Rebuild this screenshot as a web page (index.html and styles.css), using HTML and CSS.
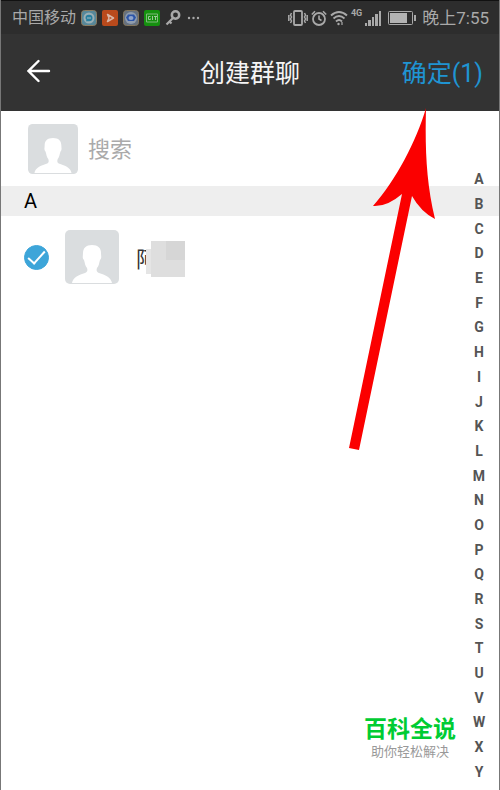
FILE: index.html
```html
<!DOCTYPE html>
<html lang="zh-CN">
<head>
    <meta charset="UTF-8">
    <meta name="viewport" content="width=device-width, initial-scale=1.0">
    <title>创建群聊</title>
    <link rel="stylesheet" href="styles.css">
</head>
<body>

    <div class="status-bar">
        <span class="carrier">中国移动</span>
        <svg class="app-icon" viewBox="0 0 16 16">
            <rect x="0.5" y="0.5" width="15" height="15" rx="3" fill="#57889a" stroke="#8b7d62"/>
            <circle cx="8" cy="8" r="5.5" fill="#9aafb5"/>
            <path d="M4.500 8a3.500 3.200 0 1 1 3.500 3.200H4.800l.7-1.300A3 3 0 0 1 4.500 8z" fill="#277f9f"/>
            <path d="M6 8h4" stroke="#a9bdc3"/>
        </svg>
        <svg class="app-icon" viewBox="0 0 16 16">
            <rect width="16" height="16" rx="2" fill="#b94a1c"/>
            <path d="M5.500 4.500l6 3.500-6 3.500 1.500-3.500z" fill="none" stroke="#d9b5a5" stroke-width="1.500" stroke-linejoin="round"/>
        </svg>
        <svg class="app-icon" viewBox="0 0 16 16">
            <rect x="0.5" y="0.5" width="15" height="15" rx="3" fill="#66717f" stroke="#83765d"/>
            <circle cx="8" cy="8" r="6" fill="#8f9cae"/>
            <path d="M3 7.500l2-3h6l2 3-2 3.500H5z" fill="#2c55a8"/>
            <ellipse cx="8" cy="8" rx="2.500" ry="2" fill="#8fa4cb"/>
        </svg>
        <svg class="app-icon" viewBox="0 0 16 16">
            <rect width="16" height="16" rx="2" fill="#15900f"/>
            <path d="M2.500 4h11v8h-11z" fill="none" stroke="#7fb87b"/>
            <path d="M6.500 6.500h-2v3h2v-1M8.500 6v4M10 6.500h3M11.500 6.500V10" fill="none" stroke="#9cc998"/>
        </svg>
        <svg class="app-icon" viewBox="0 0 16 16" fill="none" stroke="#a9a9a9">
            <circle cx="10.500" cy="5" r="3.700" stroke-width="2.500"/>
            <path d="M8 8l-6.500 6.500M4 11l2.500 2.500" stroke-width="2.200"/>
        </svg>
        <svg class="app-icon" viewBox="0 0 16 16" fill="#a9a9a9">
            <circle cx="3" cy="8" r="1.200"/>
            <circle cx="7.500" cy="8" r="1.200"/>
            <circle cx="12" cy="8" r="1.200"/>
        </svg>

        <div class="indicators">
            <svg width="20" height="16" viewBox="0 0 20 16" fill="none" stroke="#a9a9a9">
                <rect x="6" y="1" width="8" height="14" rx="1" stroke-width="1.800"/>
                <path d="M3.500 3L2.500 5l1 2-1 2 1 2-1 2M16.500 3l1 2-1 2 1 2-1 2 1 2M.8 5v6M19.200 5v6" stroke-width="1.500"/>
            </svg>
            <svg width="16" height="16" viewBox="0 0 16 16" fill="none" stroke="#a9a9a9">
                <circle cx="8" cy="9" r="6" stroke-width="1.800"/>
                <path d="M8 5.500V9l2.500 1.500M.8 4.500L4 1.300M15.200 4.500L12 1.300" stroke-width="1.600"/>
            </svg>
            <svg width="18" height="16" viewBox="0 0 18 16" fill="none" stroke="#a9a9a9" stroke-width="1.900">
                <path d="M1 5.500Q9-1.500 17 5.500M3.500 8.500Q9 3.500 14.500 8.500M6 11.500Q9 8.500 12 11.500"/>
                <circle cx="8.500" cy="14" r="1.200" fill="#a9a9a9" stroke="none"/>
                <path d="M12 12v3" stroke-width="1.200"/>
            </svg>
            <span class="network">4G</span>
            <svg width="17" height="16" viewBox="0 0 17 16" fill="#a9a9a9">
                <path d="M0 13h2v3H0zM3 10h3v6H3zM7 7h2v9H7zM10 4h3v12h-3zM14 1h2v15h-2z"/>
            </svg>
            <svg class="battery" width="28" height="14" viewBox="0 0 28 14">
                <rect x="0.5" y="0.5" width="24" height="13" rx="1" fill="none" stroke="#a9a9a9"/>
                <path d="M2 2h17v10H2z" fill="#b3b3b3"/>
                <path d="M26 4h2v6h-2z" fill="#a9a9a9"/>
            </svg>
            <span class="clock">晚上7:55</span>
        </div>
    </div>

    <header class="title-bar">
        <button class="back" aria-label="返回">
            <svg width="24" height="24" viewBox="0 0 24 24" fill="none" stroke="#fff" stroke-width="2.400" stroke-linecap="round">
                <path d="M11.500 2L1.500 12l10 10M1.500 12H22"/>
            </svg>
        </button>
        <h1 class="title">创建群聊</h1>
        <button class="confirm">确定(1)</button>
    </header>

    <main class="content">
        <div class="search-row">
            <svg class="avatar avatar-small" viewBox="0 0 54 54">
                <rect width="54" height="54" rx="5" fill="#dadddf"/>
                <path d="M7 53c1-6 7-8 13-10 2-1 3-2 2-5-2-2-2-5-3-8-2-2-1-4-1-7 0-5 3-8 9-8s9 3 9 8c0 3 1 5-1 7-1 3-1 6-3 8-1 3 0 4 2 5 6 2 12 4 13 10z" fill="#fff"/>
            </svg>
            <input class="search" type="text" placeholder="搜索" aria-label="搜索">
        </div>

        <h2 class="section">A</h2>

        <label class="contact">
            <input class="check" type="checkbox" checked>
            <svg class="avatar" viewBox="0 0 54 54">
                <rect width="54" height="54" rx="5" fill="#dadddf"/>
                <path d="M7 53c1-6 7-8 13-10 2-1 3-2 2-5-2-2-2-5-3-8-2-2-1-4-1-7 0-5 3-8 9-8s9 3 9 8c0 3 1 5-1 7-1 3-1 6-3 8-1 3 0 4 2 5 6 2 12 4 13 10z" fill="#fff"/>
            </svg>
            <span class="name">阿
                <svg class="mosaic" width="39" height="36" viewBox="0 0 39 36">
                    <path d="M0 8h6v25H0z" fill="#e5e5e5"/>
                    <path d="M5 0h34v36H5z" fill="#dedede"/>
                    <path d="M20 0h19v19H20z" fill="#d6d6d6"/>
                </svg>
            </span>
        </label>

        <nav class="index">
            <a href="#A">A</a>
            <a href="#B">B</a>
            <a href="#C">C</a>
            <a href="#D">D</a>
            <a href="#E">E</a>
            <a href="#F">F</a>
            <a href="#G">G</a>
            <a href="#H">H</a>
            <a href="#I">I</a>
            <a href="#J">J</a>
            <a href="#K">K</a>
            <a href="#L">L</a>
            <a href="#M">M</a>
            <a href="#N">N</a>
            <a href="#O">O</a>
            <a href="#P">P</a>
            <a href="#Q">Q</a>
            <a href="#R">R</a>
            <a href="#S">S</a>
            <a href="#T">T</a>
            <a href="#U">U</a>
            <a href="#V">V</a>
            <a href="#W">W</a>
            <a href="#X">X</a>
            <a href="#Y">Y</a>
        </nav>

        <div class="watermark">
            <strong>百科全说</strong>
            <span>助你轻松解决</span>
        </div>
    </main>

    <!-- arrow pointing at the confirm button -->
    <svg class="pointer" width="88" height="344" viewBox="0 0 88 344">
        <path d="M78 1C77 40 78 75 87 112Q73 105 64 89L11 343 1 341 54 87Q39 100 25 99C48 73 68 35 78 1z" fill="#fb0000"/>
    </svg>

</body>
</html>
```
FILE: styles.css
```css
* {
    box-sizing: border-box;
}

body {
    position: relative;
    display: flex;
    flex-direction: column;
    min-height: 100vh;
    margin: 0;
    border: 1px solid #777;
    border-width: 0 1px;
    background-color: #fff;
    font-family: Roboto, "Noto Sans CJK SC", sans-serif;
}

button {
    padding: 0;
    border: none;
    background: none;
    font-family: inherit;
    cursor: pointer;
}

/* Status bar */
.status-bar {
    display: flex;
    align-items: center;
    gap: 5px;
    height: 34px;
    padding: 0 10px 0 11px;
    border-top: 1px solid #111;
    background-color: #2d2d2d;
    color: #a9a9a9;
    font-size: 16px;
    line-height: 20px;
}

.app-icon {
    width: 16px;
    height: 16px;
}

.indicators {
    display: flex;
    align-items: center;
    gap: 3px;
    margin-left: auto;
}

.network {
    align-self: flex-start;
    font-size: 9px;
    font-weight: bold;
    line-height: 10px;
}

.battery {
    margin: 0 3px;
}

.clock {
    font-size: 17px;
}

/* Title bar */
.title-bar {
    display: grid;
    grid-template-columns: 1fr auto 1fr;
    align-items: center;
    height: 77px;
    padding: 0 16px 3px;
    background-color: #333;
}

.back {
    justify-self: start;
    height: 24px;
    margin-left: 10px;
}

.title {
    margin: 0;
    color: #f5f5f5;
    font-size: 25px;
    font-weight: normal;
}

.confirm {
    justify-self: end;
    color: #1f94d2;
    font-size: 25px;
}

/* Contact list */
.content {
    position: relative;
    flex: 1;
}

.search-row {
    display: flex;
    align-items: center;
    gap: 10px;
    height: 75px;
    padding: 0 48px 0 27px;
}

.avatar {
    flex: none;
    width: 54px;
    height: 54px;
}

.avatar-small {
    width: 50px;
    height: 50px;
}

.search {
    flex: 1;
    min-width: 0;
    padding: 2px 0 0;
    border: none;
    outline: none;
    background: none;
    font-family: inherit;
    font-size: 22px;
}

.search::placeholder {
    color: #aaa;
}

.section {
    margin: 0;
    padding: 1px 23px 0;
    background-color: #eee;
    color: #000;
    font-size: 20px;
    font-weight: normal;
    line-height: 29px;
}

.contact {
    display: flex;
    align-items: center;
    height: 82px;
    padding: 0 23px;
}

.check {
    display: flex;
    align-items: center;
    justify-content: center;
    appearance: none;
    width: 25px;
    height: 25px;
    margin: 0 16px 0 0;
    border: 1px solid #ccc;
    border-radius: 50%;
}

.check:checked {
    border-color: #3da5d9;
    background-color: #3da5d9;
}

.check:checked::before {
    content: "";
    width: 15px;
    height: 7px;
    margin-bottom: 4px;
    border: solid #fff;
    border-width: 0 0 2px 2px;
    transform: rotate(-48deg);
}

.name {
    position: relative;
    margin-left: 17px;
    color: #333;
    font-size: 22px;
}

/* Covers the rest of the name */
.mosaic {
    position: absolute;
    top: 0;
    left: 10px;
}

/* Letter index */
.index {
    position: absolute;
    top: 56px;
    right: 8px;
    bottom: 6px;
    display: flex;
    flex-direction: column;
    width: 24px;
}

.index a {
    display: flex;
    flex: 1;
    align-items: center;
    justify-content: center;
    color: #555;
    font-size: 14px;
    font-weight: bold;
    line-height: 16px;
    text-decoration: none;
}

.watermark {
    position: absolute;
    right: 43px;
    bottom: 30px;
    display: flex;
    flex-direction: column;
    align-items: center;
    color: #999;
    font-size: 13px;
    line-height: 16px;
}

.watermark strong {
    color: #0c3;
    font-size: 23px;
    line-height: 28px;
}

.pointer {
    position: absolute;
    top: 107px;
    right: 63px;
}
```
